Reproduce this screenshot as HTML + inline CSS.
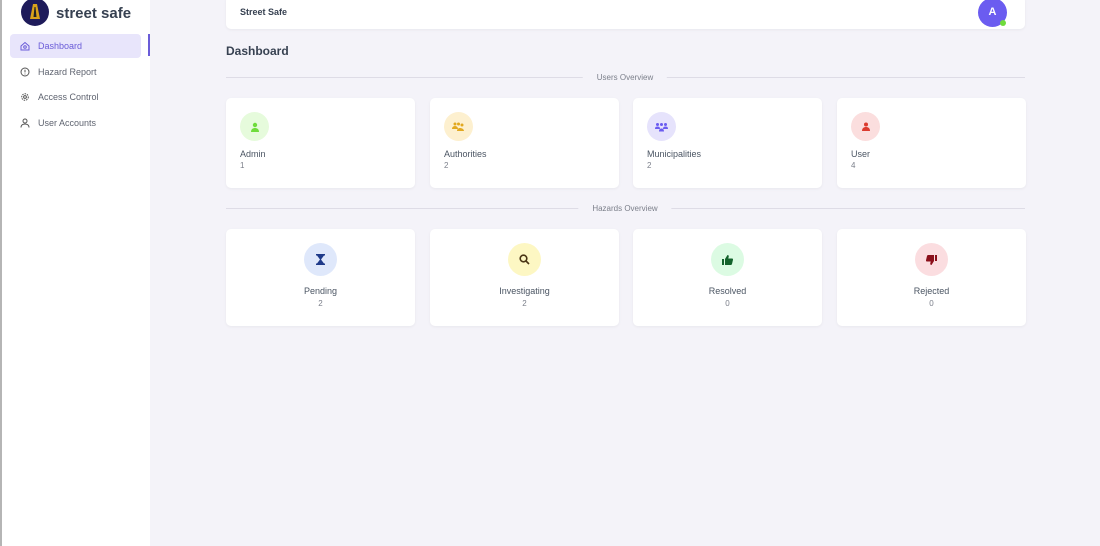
<!DOCTYPE html>
<html><head><style>
*{box-sizing:border-box;margin:0;padding:0}
body{width:1100px;height:546px;background:#f4f3f9;font-family:"Liberation Sans",sans-serif;position:relative;overflow:hidden;color:#4b5563}
.edge{position:absolute;left:0;top:0;width:2px;height:546px;background:#b5b5b5}
.side{position:absolute;left:2px;top:0;width:148px;height:546px;background:#fff}
.logo{position:absolute;left:21px;top:-2px;width:28px;height:28px;border-radius:50%;background:#1e1b5a}
.brand{position:absolute;left:56px;top:5px;font-size:15px;font-weight:bold;color:#374151}
.nav{position:absolute;left:10px;width:131px;height:24px;font-size:9px;color:#5f6470;display:flex;align-items:center;padding-left:10px;gap:8px}
.nav.act{background:#e8e5fb;color:#6a5cd8;border-radius:4px}
.bar{position:absolute;left:148px;top:34px;width:2px;height:22px;background:#6a5cd8}
.hdr{position:absolute;left:226px;top:-4px;width:799px;height:33px;background:#fff;border-radius:5px;box-shadow:0 1px 3px rgba(0,0,0,.05)}
.hdr span{position:absolute;left:14px;top:11px;font-size:9px;font-weight:bold;color:#374151}
.av{position:absolute;left:978px;top:-2px;width:29px;height:29px;border-radius:50%;background:#6b5cf0;color:#fff;font-size:11px;font-weight:bold;text-align:center;line-height:29px}
.dot{position:absolute;left:1000px;top:20px;width:6px;height:6px;border-radius:50%;background:#6fdc3c}
h1{position:absolute;left:226px;top:44px;font-size:12px;color:#374151}
.div{position:absolute;left:226px;width:799px;height:1px;background:#dedce6}
.dl{position:absolute;font-size:8px;color:#7b7f8a;background:#f4f3f9;padding:0 14px;transform:translateX(-50%)}
.card{position:absolute;width:189px;background:#fff;border-radius:5px;box-shadow:0 1px 3px rgba(0,0,0,.05)}
.u{top:98px;height:90px}
.h{top:229px;height:97px;text-align:center}
.ic{width:29px;height:29px;border-radius:50%;display:flex;align-items:center;justify-content:center}
.u .ic{position:absolute;left:14px;top:14px}
.h .ic{width:33px;height:33px;margin:14px auto 0}
.t{font-size:9px;color:#4b5563}
.n{font-size:8px;color:#7b7f8a;margin-top:3px}
.u .t{position:absolute;left:14px;top:51px}
.u .n{position:absolute;left:14px;top:60px}
.h .t{margin-top:10px}
</style></head><body>
<div class="edge"></div><div class="side"></div>
<div class="logo"><svg width="28" height="28" viewBox="0 0 28 28"><path d="M12 6h4l3 15H9z" fill="#d9a21b"/><path d="M13.5 9h1l1 10h-3z" fill="#222"/></svg></div>
<div class="brand">street safe</div>
<div class="nav act" style="top:34px"><svg width="10" height="10" viewBox="0 0 10 10" fill="none" stroke="#6a5cd8" stroke-width="1"><path d="M1 5L5 1.5 9 5v4H1z"/><circle cx="5" cy="6" r="1.3"/></svg>Dashboard</div>
<div class="bar"></div>
<div class="nav" style="top:60px"><svg width="10" height="10" viewBox="0 0 10 10" fill="none" stroke="#555" stroke-width="1"><circle cx="5" cy="5" r="4"/><path d="M5 2.8v2.6M5 6.6v.8"/></svg>Hazard Report</div>
<div class="nav" style="top:85px"><svg width="10" height="10" viewBox="0 0 10 10" fill="none" stroke="#555" stroke-width="1"><circle cx="5" cy="5" r="3.3" stroke-dasharray="1.5 1"/><circle cx="5" cy="5" r="1.4"/></svg>Access Control</div>
<div class="nav" style="top:111px"><svg width="10" height="10" viewBox="0 0 10 10" fill="none" stroke="#555" stroke-width="1"><circle cx="5" cy="3" r="2"/><path d="M1 9.5c0-2.5 2-3.5 4-3.5s4 1 4 3.5"/></svg>User Accounts</div>
<div class="hdr"><span style="top:11px">Street Safe</span></div>
<div class="av">A</div><div class="dot"></div>
<h1>Dashboard</h1>
<div class="div" style="top:77px"></div><div class="dl" style="left:625px;top:73px">Users Overview</div>
<div class="card u" style="left:226px"><div class="ic" style="background:#e6fbdc"><svg width="10" height="10" viewBox="0 0 10 10" fill="#6fdc3c"><circle cx="5" cy="3" r="2.2"/><path d="M1 10c0-3 2-4 4-4s4 1 4 4z"/></svg></div><div class="t">Admin</div><div class="n">1</div></div>
<div class="card u" style="left:430px"><div class="ic" style="background:#fdf0cf"><svg width="13" height="10" viewBox="0 0 13 10" fill="#e2a920"><circle cx="3" cy="2" r="1.5"/><circle cx="6.5" cy="2" r="1.5"/><circle cx="10" cy="3" r="1.5"/><path d="M0 7c0-2 1.5-3 3-3s3 1 3 3zM5 9c0-2 1.5-3 3-3s4 1 4 3z"/></svg></div><div class="t">Authorities</div><div class="n">2</div></div>
<div class="card u" style="left:633px"><div class="ic" style="background:#e6e3fc"><svg width="13" height="10" viewBox="0 0 13 10" fill="#6b5cf0"><circle cx="2.5" cy="2.5" r="1.5"/><circle cx="6.5" cy="2.5" r="1.5"/><circle cx="10.5" cy="2.5" r="1.5"/><path d="M0 7c0-2 1-2.5 2.5-2.5S5 5 5 7zM8 7c0-2 1-2.5 2.5-2.5S13 5 13 7zM4 9.5c0-2 1-3 2.5-3S9 7.5 9 9.5z"/></svg></div><div class="t">Municipalities</div><div class="n">2</div></div>
<div class="card u" style="left:837px"><div class="ic" style="background:#fbdede"><svg width="10" height="10" viewBox="0 0 10 10" fill="#dc3b2f"><circle cx="5" cy="2.5" r="2"/><path d="M1 9c0-3 2-4 4-4s4 1 4 4z"/></svg></div><div class="t">User</div><div class="n">4</div></div>
<div class="div" style="top:208px"></div><div class="dl" style="left:625px;top:204px">Hazards Overview</div>
<div class="card h" style="left:226px"><div class="ic" style="background:#dfe8fb"><svg width="9" height="11" viewBox="0 0 9 11" fill="#1e3a8a"><path d="M0 0h9v1.5H8L5 5.5 8 9.5h1V11H0V9.5h1L4 5.5 1 1.5H0z"/></svg></div><div class="t">Pending</div><div class="n">2</div></div>
<div class="card h" style="left:430px"><div class="ic" style="background:#fdf7c3"><svg width="11" height="11" viewBox="0 0 11 11" fill="none" stroke="#4a3515" stroke-width="1.6"><circle cx="4.5" cy="4.5" r="3.3"/><path d="M7 7l3 3"/></svg></div><div class="t">Investigating</div><div class="n">2</div></div>
<div class="card h" style="left:633px"><div class="ic" style="background:#dcfbe3"><svg width="11" height="10" viewBox="0 0 11 10" fill="#14632c"><path d="M0 4h2v6H0zM3 4l2.5-4c1 0 1.5.7 1.2 1.8L6.3 3.5H10c.8 0 1.1.6 1 1.2L10 9c-.2.6-.6 1-1.2 1H3z"/></svg></div><div class="t">Resolved</div><div class="n">0</div></div>
<div class="card h" style="left:837px"><div class="ic" style="background:#fbdde0"><svg width="11" height="10" viewBox="0 0 11 10" fill="#8b0f1a" transform="scale(-1,-1)"><path d="M0 4h2v6H0zM3 4l2.5-4c1 0 1.5.7 1.2 1.8L6.3 3.5H10c.8 0 1.1.6 1 1.2L10 9c-.2.6-.6 1-1.2 1H3z"/></svg></div><div class="t">Rejected</div><div class="n">0</div></div>
</body></html>
